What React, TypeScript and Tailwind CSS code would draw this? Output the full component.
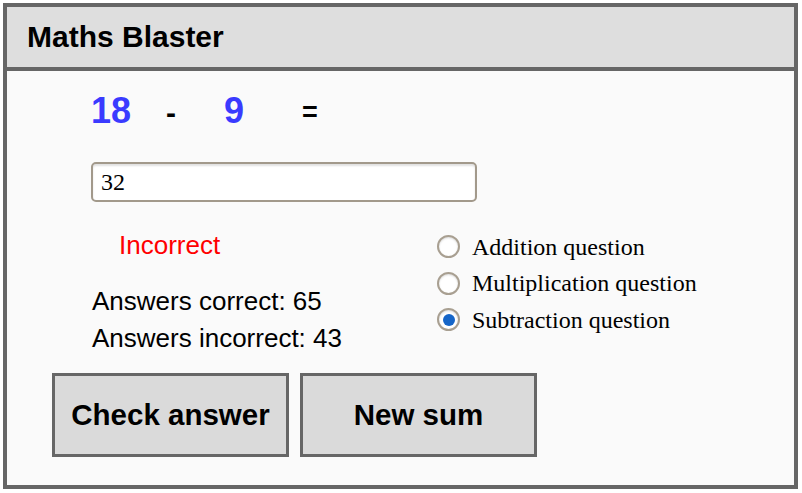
import React from 'react'

const sans = "font-['Liberation_Sans',Arial,sans-serif]"
const serif = "font-['Liberation_Serif','Times_New_Roman',serif]"

interface RadioRowProps {
  label: string
  checked?: boolean
}

const RadioRow: React.FC<RadioRowProps> = ({ label, checked }) => (
  <div className="flex h-[36.5px] items-center">
    <span className="flex h-[23px] w-[23px] items-center justify-center rounded-full border-2 border-[#a89f91] bg-white shadow-[inset_0_1px_2px_rgba(0,0,0,0.15)]">
      {checked && <span className="h-[12px] w-[12px] rounded-full bg-[#1565c8]" />}
    </span>
    <span className={`${serif} ml-[12px] text-[24px] leading-[36.5px] text-black`}>{label}</span>
  </div>
)

const App: React.FC = () => {
  return (
    <div className="p-[3px] bg-white">
      <div className={`${sans} flex h-[486px] w-[795px] flex-col overflow-hidden border-4 border-[#666666] bg-[#fafafa]`}>
        <div className="flex h-[64px] shrink-0 items-center border-b-4 border-[#666666] bg-[#dedede] pl-[20px]">
          <h1 className="text-[30px] font-bold leading-none text-black">Maths Blaster</h1>
        </div>

        <div className="flex flex-1 flex-col">
          <div className="ml-[84px] mt-[22px] flex items-baseline">
            <span className="text-[36px] font-bold leading-none text-[#3a3aff]">18</span>
            <span className="ml-[35px] text-[30px] font-bold leading-none text-black">-</span>
            <span className="ml-[48px] text-[36px] font-bold leading-none text-[#3a3aff]">9</span>
            <span className="relative -top-[2px] ml-[58px] text-[27px] font-bold leading-none text-black">=</span>
          </div>

          <input
            type="text"
            defaultValue="32"
            className={`${serif} ml-[84px] mt-[33px] h-[40px] w-[386px] rounded-[5px] border-2 border-[#a2998b] bg-white px-[8px] text-[24px] text-black shadow-[inset_0_2px_2px_rgba(0,0,0,0.12)] outline-none`}
          />

          <div className="flex items-start">
            <div className="ml-[85px] w-[345px] pt-[28px]">
              <p className="ml-[27px] text-[26px] leading-[30px] text-[#ff0000]">Incorrect</p>
              <div className="mt-[22.5px] text-[26px] leading-[37px] text-black">
                <p>Answers correct: 65</p>
                <p>Answers incorrect: 43</p>
              </div>
            </div>
            <div className="pt-[26.6px]">
              <RadioRow label="Addition question" />
              <RadioRow label="Multiplication question" />
              <RadioRow label="Subtraction question" checked />
            </div>
          </div>

          <div className="ml-[45px] mt-[16.5px] flex gap-[11px]">
            <button className="h-[84px] w-[237px] border-[3px] border-[#666666] bg-[#dadada] text-[29.5px] font-bold text-black">
              Check answer
            </button>
            <button className="h-[84px] w-[237px] border-[3px] border-[#666666] bg-[#dadada] text-[29.5px] font-bold text-black">
              New sum
            </button>
          </div>
        </div>
      </div>
    </div>
  )
}

export default App
